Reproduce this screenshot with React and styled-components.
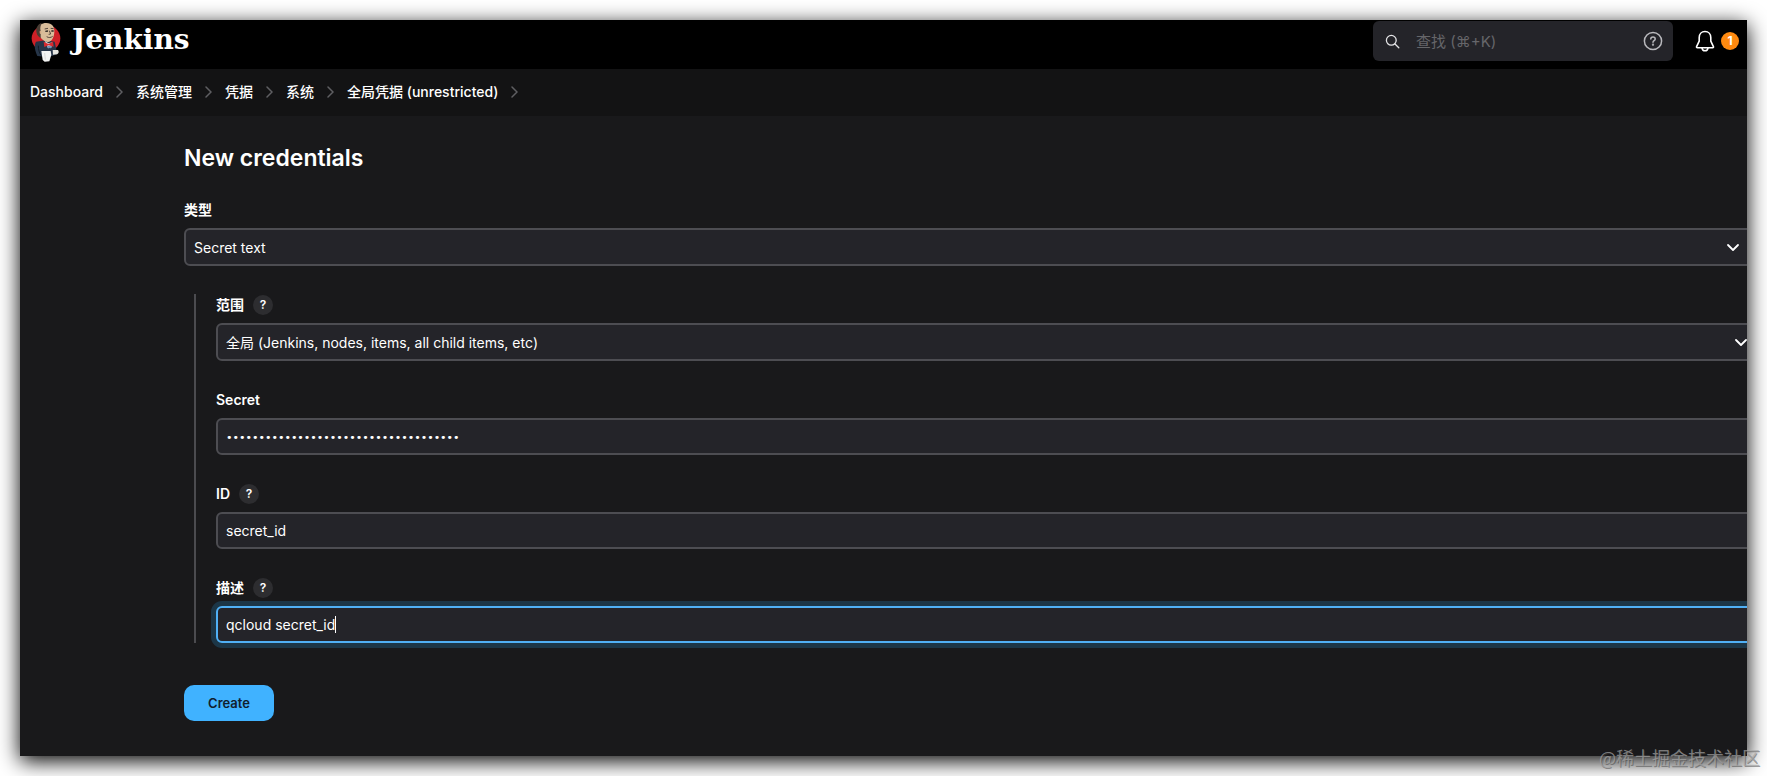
import React, { useState } from 'react'
import styled, { createGlobalStyle, css } from 'styled-components'

const GlobalStyle = createGlobalStyle`
  * {
    box-sizing: border-box;
  }

  body {
    margin: 0;
    background: #fff;
    color: #fff;
    font-family: Inter, 'Noto Sans CJK SC', sans-serif;
    font-size: 14px;
  }

  button, input, select {
    font: inherit;
    color: inherit;
    margin: 0;
  }
`

const Page = styled.div`
  position: relative;
  min-height: 100vh;
  padding: 20px;
`

const Frame = styled.div`
  display: flex;
  flex-direction: column;
  min-height: calc(100vh - 40px);
  overflow: hidden;
  background: #19191b;
  box-shadow: 0 5px 20px #000;
`

const Header = styled.header`
  display: flex;
  align-items: flex-start;
  justify-content: space-between;
  height: 49px;
  padding: 1px 8px 0 11px;
  background: #000;
`

const Brand = styled.a`
  display: flex;
  gap: 11px;
  color: #fff;
  font-family: 'DejaVu Serif', serif;
  font-size: 28px;
  font-weight: 700;
  line-height: 38px;
  text-decoration: none;
`

const HeaderTools = styled.div`
  display: flex;
  align-items: center;
`

const SearchBox = styled.div`
  display: flex;
  align-items: center;
  width: 300px;
  height: 40px;
  margin-right: 22px;
  padding: 0 10px 0 12px;
  border-radius: 6px;
  background: #242429;
`

const SearchInput = styled.input`
  flex: 1;
  min-width: 0;
  margin: 0 16px;
  padding: 0;
  border: 0;
  outline: 0;
  background: none;
  font-size: 15px;

  &::placeholder {
    color: #66666a;
    opacity: 1;
  }
`

const IconButton = styled.button`
  display: flex;
  padding: 0;
  border: 0;
  background: none;
  cursor: pointer;
`

const Badge = styled.span`
  width: 18px;
  height: 18px;
  margin-left: 6px;
  border-radius: 50%;
  background: #ff8a10;
  font-size: 12px;
  font-weight: 700;
  line-height: 18px;
  text-align: center;
`

const Breadcrumbs = styled.nav`
  display: flex;
  align-items: center;
  gap: 13px;
  height: 47px;
  padding: 0 10px 2px;
  background: #131314;
`

const Crumb = styled.a`
  color: #fff;
  font-weight: 500;
  line-height: 20px;
  text-decoration: none;
`

const Main = styled.main`
  padding: 26px 0 35px 164px;
`

const Title = styled.h1`
  margin: 0 0 25px;
  font-size: 23px;
  font-weight: 600;
  line-height: 32px;
`

/* the form is wider than the frame and runs out of it on the right */
const Form = styled.form`
  display: flex;
  flex-direction: column;
  align-items: stretch;
  gap: 28px;
  margin-right: -6px;
`

const Nested = styled.div`
  display: flex;
  flex-direction: column;
  gap: 28px;
  margin: 0 -8px 0 10px;
  padding-left: 20px;
  border-left: 2px solid #4b4b4f;
`

const Field = styled.div`
  display: flex;
  flex-direction: column;
  gap: 7px;
`

const LabelRow = styled.div`
  display: flex;
  align-items: center;
  gap: 9px;
  height: 22px;
`

const Label = styled.label`
  font-weight: 600;
  line-height: 20px;
`

const HelpButton = styled.button`
  width: 20px;
  height: 20px;
  padding: 0;
  border: 0;
  border-radius: 50%;
  background: #2d2d30;
  font-size: 12px;
  font-weight: 600;
  line-height: 20px;
  cursor: pointer;
`

const control = css`
  width: 100%;
  padding: 0 8px;
  border: 2px solid #4d4d52;
  border-radius: 6px;
  outline: 0;
  background: #242429;
`

const SelectWrap = styled.div`
  display: grid;
  align-items: center;

  > * {
    grid-area: 1 / 1;
  }

  svg {
    justify-self: end;
    margin-right: 13px;
    pointer-events: none;
  }
`

const Select = styled.select`
  ${control}
  height: 38px;
  appearance: none;
`

const Input = styled.input`
  ${control}
  height: 37px;

  &[type='password'] {
    padding-top: 2px;
    font-family: 'DejaVu Sans', sans-serif;
    font-size: 11px;
  }
`

const InputShell = styled.div`
  ${control}
  display: flex;
  align-items: center;
  height: 37px;

  &:focus-within {
    border-color: #50b0f5;
    box-shadow: 0 0 0 5px #1c3647;
  }
`

const BareInput = styled.input`
  field-sizing: content;
  padding: 0;
  border: 0;
  outline: 0;
  background: none;
  caret-color: transparent;
`

const Caret = styled.span`
  width: 1px;
  height: 17px;
  background: #fff;
`

const SubmitButton = styled.button`
  align-self: flex-start;
  width: 90px;
  height: 36px;
  margin-top: 14px;
  border: 0;
  border-radius: 10px;
  background: #40b2ff;
  color: #10202e;
  font-size: 13px;
  font-weight: 600;
  cursor: pointer;
`

const Watermark = styled.div`
  position: absolute;
  right: 7px;
  bottom: 5px;
  color: rgba(165, 165, 165, 0.7);
  font-family: 'Noto Sans CJK SC', sans-serif;
  font-size: 18px;
  line-height: 28px;
  text-shadow: 1px 1px 0 rgba(70, 70, 70, 0.5);
`

function Butler() {
  return (
    <svg width="30" height="41" viewBox="93 60 90 123" aria-hidden="true">
      <ellipse cx="138" cy="112" rx="43" ry="40" fill="#cf2027" />
      <path d="M108 122l28-4 28 4 8 38-26 8-34-3c-5-12-12-30-4-43z" fill="#263548" />
      <path d="M114 88c1-15 11-22 25-22 17 0 25 11 24 27-1 17-8 29-19 30-14-1-27-12-30-35z" fill="#d9bd9a" />
      <path d="M110 96c-4-15 3-26 15-31-3 9-6 17-3 24l0 22c-7-4-11-9-12-15z" fill="#4a3d34" />
      <path d="M119 90c4-2 6 2 5 6s-4 4-5 0" fill="#d4ab86" />
      <path d="M134 84l10-2M152 82l9 1M148 89l4 10-6 1M140 107c6 4 13 3 18-1" fill="none" stroke="#54453c" strokeWidth="3" />
      <path d="M136 91l8-1M154 90l7 0" stroke="#2b2522" strokeWidth="4" />
      <path d="M134 120l12 7 10-3-2 16-10 2z" fill="#d9dde2" />
      <path d="M131 122l14 7 14-7 2 15-15-4-13 5z" fill="#d72a30" />
      <path d="M141 134l14 2-2 6-10-2z" fill="#6d90b8" />
      <path d="M124 150l28 0 2 12-6 19-14 1-6-5z" fill="#f3f4f3" />
      <path d="M158 147l16 0c4 4 2 11-3 13l-12 1z" fill="#e5e5df" />
      <path d="M115 134c0 12 3 22 8 29" fill="none" stroke="#111b26" strokeWidth="3" />
      <path d="M134 156l2 20" fill="none" stroke="#c9cccb" strokeWidth="2" />
    </svg>
  )
}

function Separator() {
  return (
    <svg width="7" height="12" viewBox="0 0 7 12" fill="none" stroke="#5f5f62" strokeWidth="1.5" strokeLinecap="round" aria-hidden="true">
      <path d="M1 1l5 5-5 5" />
    </svg>
  )
}

function Chevron() {
  return (
    <svg width="14" height="9" viewBox="0 0 14 9" fill="none" stroke="#fff" strokeWidth="1.8" strokeLinecap="round" strokeLinejoin="round" aria-hidden="true">
      <path d="M2 2l5 5 5-5" />
    </svg>
  )
}

function FieldLabel({ id, text, help }) {
  return (
    <LabelRow>
      <Label htmlFor={id}>{text}</Label>
      {help && <HelpButton type="button">?</HelpButton>}
    </LabelRow>
  )
}

const crumbs = ['Dashboard', '系统管理', '凭据', '系统', '全局凭据 (unrestricted)']

function App() {
  const [secret, setSecret] = useState('x'.repeat(36))
  const [id, setId] = useState('secret_id')
  const [description, setDescription] = useState('qcloud secret_id')

  return (
    <>
      <GlobalStyle />
      <Page>
        <Frame>
          <Header>
            <Brand href="#">
              <Butler />
              Jenkins
            </Brand>
            <HeaderTools>
              <SearchBox>
                <svg width="15" height="15" viewBox="0 0 15 15" fill="none" stroke="#e4e4e6" strokeWidth="1.3" strokeLinecap="round" aria-hidden="true">
                  <circle cx="6.3" cy="6.3" r="4.9" />
                  <path d="M10 10l3.8 3.8" />
                </svg>
                <SearchInput type="text" placeholder="查找 (⌘+K)" aria-label="查找" />
                <IconButton type="button" aria-label="Help">
                  <svg width="20" height="20" viewBox="0 0 20 20" fill="none" stroke="#b9b9bd" strokeWidth="1.5" strokeLinecap="round">
                    <circle cx="10" cy="10" r="8.6" />
                    <path d="M7.8 8c0-1.3 1-2.1 2.2-2.1s2.2.8 2.2 2c0 1.6-2.2 1.7-2.2 3.3" />
                    <circle cx="10" cy="13.7" r=".4" fill="#b9b9bd" />
                  </svg>
                </IconButton>
              </SearchBox>
              <IconButton type="button" aria-label="Notifications">
                <svg width="20" height="22" viewBox="0 0 20 22" fill="none" stroke="#fff" strokeWidth="1.6" strokeLinecap="round" strokeLinejoin="round">
                  <path d="M10 1.5c-3.5 0-5.8 2.6-5.8 6v3.7L1.6 16.6c-.3.7 0 1.1.7 1.1h15.4c.7 0 1-.4.7-1.1l-2.6-5.4V7.5c0-3.4-2.3-6-5.8-6z" />
                  <path d="M7 17.9c.2 1.7 1.3 2.9 3 2.9s2.8-1.2 3-2.9" />
                </svg>
              </IconButton>
              <Badge>1</Badge>
            </HeaderTools>
          </Header>
          <Breadcrumbs>
            {crumbs.map((crumb) => (
              <React.Fragment key={crumb}>
                <Crumb href="#">{crumb}</Crumb>
                <Separator />
              </React.Fragment>
            ))}
          </Breadcrumbs>
          <Main>
            <Title>New credentials</Title>
            <Form onSubmit={(e) => e.preventDefault()}>
              <Field>
                <FieldLabel id="kind" text="类型" />
                <SelectWrap>
                  <Select id="kind">
                    <option>Secret text</option>
                  </Select>
                  <Chevron />
                </SelectWrap>
              </Field>
              <Nested>
                <Field>
                  <FieldLabel id="scope" text="范围" help />
                  <SelectWrap>
                    <Select id="scope">
                      <option>全局 (Jenkins, nodes, items, all child items, etc)</option>
                    </Select>
                    <Chevron />
                  </SelectWrap>
                </Field>
                <Field>
                  <FieldLabel id="secret" text="Secret" />
                  <Input id="secret" type="password" value={secret} onChange={(e) => setSecret(e.target.value)} />
                </Field>
                <Field>
                  <FieldLabel id="cred-id" text="ID" help />
                  <Input id="cred-id" type="text" value={id} onChange={(e) => setId(e.target.value)} />
                </Field>
                <Field>
                  <FieldLabel id="description" text="描述" help />
                  <InputShell>
                    <BareInput id="description" type="text" autoFocus value={description} onChange={(e) => setDescription(e.target.value)} />
                    <Caret />
                  </InputShell>
                </Field>
              </Nested>
              <SubmitButton type="submit">Create</SubmitButton>
            </Form>
          </Main>
        </Frame>
        <Watermark>@稀土掘金技术社区</Watermark>
      </Page>
    </>
  )
}

export default App
